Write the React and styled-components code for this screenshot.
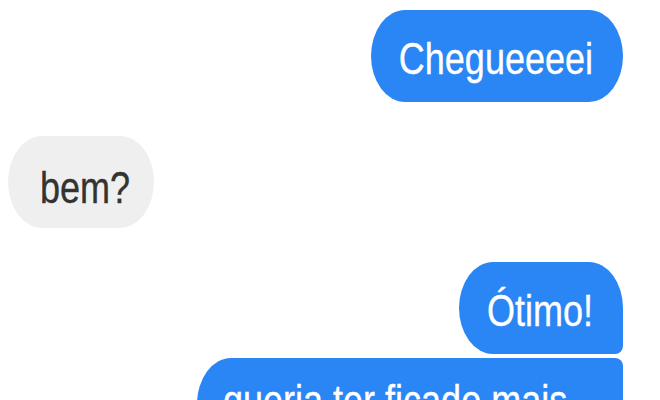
import styled, { createGlobalStyle } from "styled-components";

const GlobalStyle = createGlobalStyle`
  html, body {
    margin: 0;
    padding: 0;
    background: #fff;
    overflow: hidden;
  }
  body {
    font-family: "Liberation Sans", Arial, sans-serif;
  }
`;

const Thread = styled.div`
  display: flex;
  flex-direction: column;
  gap: 34px;
  width: 660px;
  height: 400px;
  box-sizing: border-box;
  padding: 10px 37px 0 8px;
  overflow: hidden;
`;

const Group = styled.div`
  display: flex;
  flex-direction: column;
  gap: 4px;
  align-items: ${(props) => (props.mine ? "flex-end" : "flex-start")};
`;

const Bubble = styled.div`
  box-sizing: border-box;
  max-width: 426px;
  padding: ${(props) => (props.mine ? "26px 30px 20px 28px" : "29px 24px 17px 32px")};
  background: ${(props) => (props.mine ? "#2a85f5" : "#efefef")};
  color: ${(props) => (props.mine ? "#fff" : "#333")};
  border-radius: ${(props) =>
    props.pos === "first"
      ? "34px 34px 8px 34px / 46px 46px 8px 46px"
      : props.pos === "last"
      ? "34px 8px 34px 34px / 46px 8px 46px 46px"
      : "34px / 46px"};
`;

const Text = styled.span`
  display: block;
  font-size: 36px;
  line-height: 46px;
  transform: scaleY(1.25);
  transform-origin: center;
  -webkit-text-stroke: 0.3px currentColor;
`;

export default function App() {
  return (
    <>
      <GlobalStyle />
      <Thread>
        <Group mine>
          <Bubble mine>
            <Text>Chegueeeei</Text>
          </Bubble>
        </Group>
        <Group>
          <Bubble>
            <Text>bem?</Text>
          </Bubble>
        </Group>
        <Group mine>
          <Bubble mine pos="first">
            <Text>Ótimo!</Text>
          </Bubble>
          <Bubble mine pos="last" style={{ width: 426, paddingLeft: 26 }}>
            <Text>queria ter ficado mais tempo aí com vocês</Text>
          </Bubble>
        </Group>
      </Thread>
    </>
  );
}
